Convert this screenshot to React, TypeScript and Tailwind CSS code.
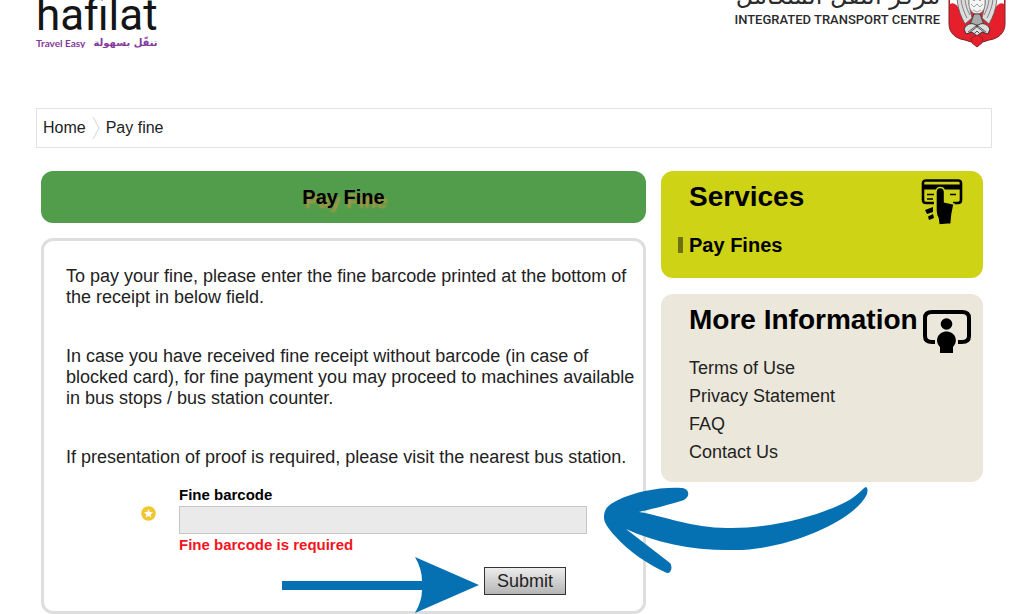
const links = ["Terms of Use", "Privacy Statement", "FAQ", "Contact Us"];

function Emblem() {
  return (
    <svg
      width="58"
      height="82"
      viewBox="0 -34 58 82"
      className="shrink-0"
      role="img"
      aria-label="Emblem"
    >
      <path d="M1-34H57V24C57 33 50 39 41 40L35 42 29 47 23 42 17 40C8 39 1 33 1 24Z" fill="#e5202c" />
      <path d="M2-34H56V4C52 2 49 5 46 10L39-6H19L12 10C9 5 6 2 2 4Z" fill="#fff" />
      <path
        d="M1-34V24C1 33 8 39 17 40L23 42M57-34V24C57 33 50 39 41 40L35 42"
        fill="none"
        stroke="#7b2328"
        strokeWidth="1"
      />
      {/* wings */}
      <path d="M11-20C7-4 9 10 17 24L24 18 21 4 22-20Z" fill="#dcdcdc" stroke="#555" strokeWidth=".8" />
      <path d="M47-20C51-4 49 10 41 24L34 18 37 4 36-20Z" fill="#dcdcdc" stroke="#555" strokeWidth=".8" />
      <path
        d="M13-10C12 2 15 10 19 18M17-10C16 0 18 8 22 15M45-10C46 2 43 10 39 18M41-10C42 0 40 8 36 15"
        stroke="#777"
        strokeWidth=".9"
        fill="none"
      />
      {/* body and tail */}
      <path d="M21-20H37L37 4C37 10 33 14 29 14S21 10 21 4Z" fill="#f4f4f4" stroke="#777" strokeWidth=".8" />
      <path
        d="M23-2 26 1 29-2 32 1 35-2M23 4 26 7 29 4 32 7 35 4M25 10 29 12 33 10"
        fill="none"
        stroke="#999"
        strokeWidth=".9"
      />
      <path d="M26 14H32L36 25H22Z" fill="#aaa" stroke="#333" strokeWidth=".8" />
      <path
        d="M16 29C19 23 25 22 29 26 33 22 39 23 42 29L40 34 34 32 29 36 24 32 18 34Z"
        fill="#ddd"
        stroke="#333"
      />
      <path d="M20 32 28 26 37 33M38 32 30 26 21 33M25 35 29 31 33 35" fill="none" stroke="#555" />
      <path d="M23 38 29 35 35 38 34 43 29 47 24 43Z" fill="#e5202c" stroke="#8f1f26" strokeWidth=".8" />
    </svg>
  );
}

function CardTapIcon() {
  return (
    <svg width="42" height="46" viewBox="0 0 42 46" className="shrink-0" aria-hidden="true">
      <path
        d="M13 24H5Q2 24 2 21V4Q2 1.500 5 1.500H37Q40 1.500 40 4V21Q40 24 37 24H32"
        fill="none"
        stroke="#000"
        strokeWidth="2.600"
      />
      <rect x="2" y="5.500" width="38" height="5" />
      <path d="M6 15.500H13M6 20H12M29 15.500H35" stroke="#000" strokeWidth="1.600" />
      <path
        d="M15 30V13C15 7 23.500 7 23.500 13V23L33 25 31 35 30 45 18 46 17 39C15 36 15 33 15 30Z"
        fill="#000"
        stroke="#ced315"
        strokeWidth="1.400"
      />
      <path d="M4 31 12 28V33L6 35ZM7 37.500 12 35 13 39 8 41Z" />
    </svg>
  );
}

function PresenterIcon() {
  return (
    <svg width="48" height="44" viewBox="0 0 48 44" className="shrink-0" aria-hidden="true">
      <path
        d="M12 32H9Q2 32 2 26V8Q2 2 9 2H39Q46 2 46 8V26Q46 32 39 32H35"
        fill="none"
        stroke="#000"
        strokeWidth="4"
      />
      <circle cx="23.500" cy="14" r="5.800" />
      <path d="M17 43V37C11 31 15 21.500 23.500 21.500S36 31 30 37V43Z" />
    </svg>
  );
}

function Header() {
  return (
    <header className="flex h-12 items-end justify-between overflow-hidden pr-[18px] pl-9">
      <a href="#home" className="flex flex-col">
        <span className="font-['Roboto',sans-serif] text-[44px] leading-[46px] text-[#151515]">
          hafilat
        </span>
        <span className="flex items-end justify-between text-[10px] leading-[10px] font-bold text-[#84389b]">
          <span className="font-['Lato',sans-serif]">Travel Easy</span>
          <span lang="ar" dir="rtl" className="font-['DejaVu_Sans',sans-serif]">
            تنقّل بسهولة
          </span>
        </span>
      </a>
      <div className="flex items-end gap-2">
        <div className="flex flex-col items-end pb-[18px] text-[#2b2b2b]">
          <span lang="ar" dir="rtl" className="font-['DejaVu_Sans',sans-serif] text-[24px] leading-7 whitespace-nowrap">
            مركز النقل المتكامل
          </span>
          <span className="font-['Roboto',sans-serif] text-[13px] leading-5 font-medium whitespace-nowrap">
            INTEGRATED TRANSPORT CENTRE
          </span>
        </div>
        <Emblem />
      </div>
    </header>
  );
}

function Breadcrumb() {
  return (
    <nav
      aria-label="Breadcrumb"
      className="mt-[60px] mr-8 ml-9 flex h-10 items-center gap-1.5 border border-[#e2e2e2] px-1.5 text-base text-[#222]"
    >
      <a href="#home">Home</a>
      <svg width="8" height="24" viewBox="0 0 8 24" aria-hidden="true">
        <path d="M1 1 7 12 1 23" fill="none" stroke="#d5d5d5" />
      </svg>
      <a href="#pay-fine">Pay fine</a>
    </nav>
  );
}

function FineForm() {
  return (
    <section className="relative mt-[15px] rounded-xl border-3 border-[#dedede] pt-[25px] pr-1 pb-4 pl-[22px]">
      <div className="space-y-[38px] text-lg leading-[21px]">
        <p>
          To pay your fine, please enter the fine barcode printed at the bottom of
          <br />
          the receipt in below field.
        </p>
        <p>
          In case you have received fine receipt without barcode (in case of
          <br />
          blocked card), for fine payment you may proceed to machines available
          <br />
          in bus stops / bus station counter.
        </p>
        <p>If presentation of proof is required, please visit the nearest bus station.</p>
      </div>

      <form className="mt-4 pr-[52px] pl-[75px]" onSubmit={(e) => e.preventDefault()}>
        <div className="flex gap-[23px]">
          <svg width="15" height="15" viewBox="0 0 15 15" className="mt-[22px] shrink-0" aria-hidden="true">
            <circle cx="7.500" cy="7.500" r="7.300" fill="#f2c62f" />
            <path d="m7.500 3 1.300 3 3.200.3-2.400 2.100.7 3.200-2.800-1.700-2.800 1.700.7-3.200L3 6.300 6.200 6z" fill="#fff" />
          </svg>
          <div className="flex grow flex-col text-[15px] leading-[22px] font-bold">
            <label htmlFor="barcode" className="text-black">
              Fine barcode
            </label>
            <input
              id="barcode"
              type="text"
              aria-describedby="barcode-error"
              className="h-7 w-full border border-[#c6c6c6] bg-[#eaeaea] px-2 font-normal outline-none"
            />
            <span id="barcode-error" className="text-[#f5141c]">
              Fine barcode is required
            </span>
          </div>
        </div>
        <div className="mt-[11px] flex items-start justify-end gap-1 pr-[21px]">
          <svg width="198" height="56" viewBox="0 0 198 56" className="-mt-2.5 -mb-5" aria-hidden="true">
            <path d="M0 24H140Q140 12 133 0L197 28 133 56Q140 44 140 33H0Z" fill="#0570b2" />
          </svg>
          <button
            type="submit"
            className="h-7 border border-[#333] bg-linear-to-b from-[#ededed] to-[#b5b5b5] px-3 text-lg leading-6 text-[#222]"
          >
            Submit
          </button>
        </div>
      </form>

      <svg
        width="265"
        height="88"
        viewBox="0 0 265 88"
        className="absolute -right-[226px] bottom-9 z-10"
        aria-hidden="true"
      >
        <path
          d="M0 30C0 22 4 18 14 13 31 5 55 0 77 1 85 1 87 9 80 13 68 17 48 22 35 25 60 29 88 41 123 41 165 42 218 29 247 12 257 5 260 0 262 0 264 1 264 5 262 9 248 35 182 63 131 63 91 64 52 56 22 42L66 76C69 80 67 87 63 86 45 78 24 64 11 49 4 41 0 36 0 30Z"
          fill="#0570b2"
        />
      </svg>
    </section>
  );
}

function Sidebar() {
  return (
    <aside className="flex w-[322px] shrink-0 flex-col gap-4 text-black">
      <section className="rounded-xl bg-[#ced315] pt-2 pr-5 pb-[13px] pl-7">
        <div className="flex items-start justify-between">
          <h2 className="text-[28px] leading-9 font-bold">Services</h2>
          <CardTapIcon />
        </div>
        <a href="#pay-fines" className="-ml-[11px] flex items-center gap-1.5 text-xl leading-10 font-bold">
          <span className="h-4 w-[5px] bg-[#6e7010]" />
          Pay Fines
        </a>
      </section>
      <section className="rounded-xl bg-[#ebe7db] pt-2 pr-3 pb-4 pl-7">
        <div className="flex items-start justify-between">
          <h2 className="text-[28px] leading-9 font-bold whitespace-nowrap">More Information</h2>
          <div className="pt-2">
            <PresenterIcon />
          </div>
        </div>
        <ul className="text-lg leading-7 text-[#222]">
          {links.map((label) => (
            <li key={label}>
              <a href="#info">{label}</a>
            </li>
          ))}
        </ul>
      </section>
    </aside>
  );
}

export default function App() {
  return (
    <div className="overflow-hidden bg-white font-['Liberation_Sans',Arial,sans-serif] text-[#222]">
      <Header />
      <Breadcrumb />
      <main className="mt-[23px] flex items-start gap-[15px] px-[41px]">
        <div className="grow">
          <h1 className="rounded-xl bg-[#529d4b] text-center text-xl leading-[52px] font-bold text-black [text-shadow:3px_4px_2px_#a99645]">
            Pay Fine
          </h1>
          <FineForm />
        </div>
        <Sidebar />
      </main>
    </div>
  );
}
